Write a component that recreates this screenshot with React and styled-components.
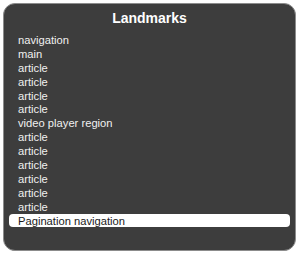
import styled, { createGlobalStyle } from "styled-components";

const items = [
  "navigation",
  "main",
  "article",
  "article",
  "article",
  "article",
  "video player region",
  "article",
  "article",
  "article",
  "article",
  "article",
  "article",
  "Pagination navigation",
];

const App = () => {
  return (
    <>
      <GlobalStyle />
      <Panel>
        <Title>Landmarks</Title>
        <List>
          {items.map((label, i) => (
            <Item key={i} $selected={i === items.length - 1}>
              {label}
            </Item>
          ))}
        </List>
      </Panel>
    </>
  );
};
export default App;

//==============================styled-components

const GlobalStyle = createGlobalStyle`
  body {
    margin: 0;
    background: #ffffff;
    font-family: "Liberation Sans", Arial, sans-serif;
  }
`;

const Panel = styled.div`
  box-sizing: border-box;
  margin: 3px;
  width: 293px;
  height: 248px;
  background: #3d3d3d;
  border: 1px solid #8c8c8c;
  border-radius: 12px;
  display: flex;
  flex-direction: column;
  padding: 6px 5px 0 5px;
`;

const Title = styled.div`
  text-align: center;
  color: #ffffff;
  font-size: 14px;
  font-weight: bold;
  line-height: 17px;
  height: 23px;
`;

const List = styled.div`
  display: flex;
  flex-direction: column;
`;

const Item = styled.div`
  height: 13.9px;
  line-height: 14px;
  font-size: 11.2px;
  padding-left: 9px;
  border-radius: 4px;
  color: ${(p) => (p.$selected ? "#1a1a1a" : "#f0f0f0")};
  background: ${(p) => (p.$selected ? "#ffffff" : "transparent")};
`;
